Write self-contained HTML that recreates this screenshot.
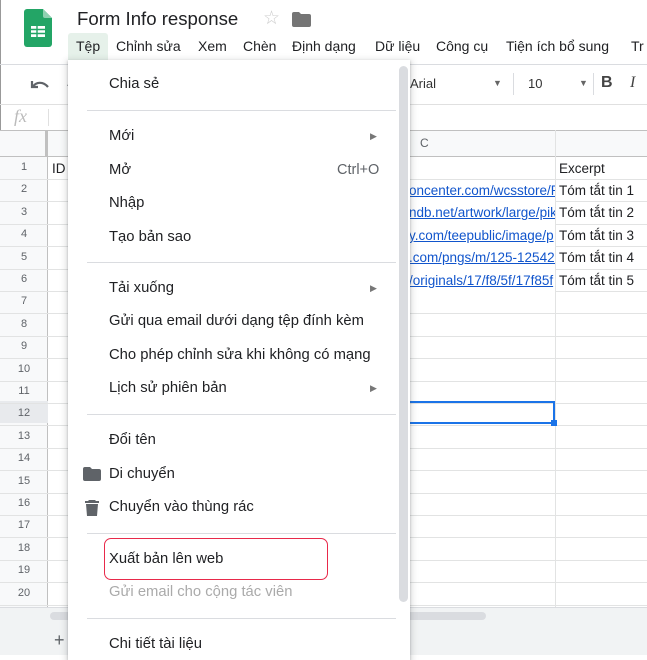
<!DOCTYPE html><html><head><meta charset="utf-8"><style>
*{margin:0;padding:0;box-sizing:border-box}
body{width:647px;height:655px;overflow:hidden;position:relative;background:#fff;font-family:"Liberation Sans",Arial,sans-serif;color:#202124}
.a{position:absolute}
.mb{position:absolute;top:38px;font-size:14px;color:#202124;white-space:nowrap}
.menu span.t{position:absolute;left:41px;font-size:14.8px;color:#202124;white-space:nowrap}
.hr{position:absolute;left:19px;width:309px;height:1px;background:#dadce0}
.rn{position:absolute;left:0;width:48px;text-align:center;font-size:11px;color:#5f6368}
.hl{position:absolute;left:0;width:647px;height:1px;background:#e2e3e3}
.lk{color:#1155cc;text-decoration:underline;font-size:13.5px;white-space:nowrap}
</style></head><body>
<svg class="a" style="left:24px;top:9px" width="28" height="38" viewBox="0 0 28 38"><path d="M3 0h16l9 9v26a3 3 0 0 1-3 3H3a3 3 0 0 1-3-3V3a3 3 0 0 1 3-3z" fill="#23a566"/><path d="M19 0l9 9h-7a2 2 0 0 1-2-2z" fill="#8ed1b1"/><rect x="7" y="17" width="14" height="11" fill="#fff"/><path d="M7 20.5h14M7 24.5h14M13 17v11" stroke="#23a566" stroke-width="1.4"/></svg>
<div class="a" style="left:77px;top:8px;font-size:18.6px;color:#202124">Form Info response</div>
<div class="a" style="left:263px;top:7px;font-size:19px;color:#ccc">☆</div>
<svg class="a" style="left:292px;top:12px" width="19" height="15"><path d="M0 2a2 2 0 0 1 2-2h5l2 2h8a2 2 0 0 1 2 2v9a2 2 0 0 1-2 2H2a2 2 0 0 1-2-2z" fill="#757575"/></svg>
<div class="a" style="left:68px;top:33px;width:40px;height:27px;background:#e6f1ea;border-radius:3px 3px 0 0"></div>
<span class="mb" style="left:76px">Tệp</span>
<span class="mb" style="left:116px">Chỉnh sửa</span>
<span class="mb" style="left:198px">Xem</span>
<span class="mb" style="left:243px">Chèn</span>
<span class="mb" style="left:292px">Định dạng</span>
<span class="mb" style="left:375px">Dữ liệu</span>
<span class="mb" style="left:436px">Công cụ</span>
<span class="mb" style="left:506px">Tiện ích bổ sung</span>
<span class="mb" style="left:631px">Tr</span>
<div class="a" style="left:0;top:0;width:1px;height:655px;background:#999"></div>
<div class="a" style="left:0;top:64px;width:647px;height:1px;background:#dadce0"></div>
<svg class="a" style="left:30px;top:78px" width="50" height="14"><path d="M2 3v6h6" fill="none" stroke="#5f6368" stroke-width="2.2"/><path d="M3 8.5C6 4 13 3 18 9" fill="none" stroke="#5f6368" stroke-width="2.2"/><path d="M38 8c3-4 7-5 12-3" fill="none" stroke="#5f6368" stroke-width="2.2"/></svg>
<div class="a" style="left:410px;top:76px;font-size:13px;color:#333">Arial</div>
<div class="a" style="left:493px;top:78px;font-size:9px;color:#666">▼</div>
<div class="a" style="left:513px;top:73px;width:1px;height:22px;background:#dadce0"></div>
<div class="a" style="left:528px;top:76px;font-size:13px;color:#333">10</div>
<div class="a" style="left:579px;top:78px;font-size:9px;color:#666">▼</div>
<div class="a" style="left:593px;top:73px;width:1px;height:22px;background:#dadce0"></div>
<div class="a" style="left:601px;top:74px;font-size:16px;font-weight:bold;color:#444">B</div>
<div class="a" style="left:630px;top:74px;font-size:16px;font-style:italic;font-family:'Liberation Serif',serif;color:#444">I</div>
<div class="a" style="left:0;top:104px;width:647px;height:1px;background:#e0e0e0"></div>
<div class="a" style="left:14px;top:106px;font-size:18px;font-style:italic;font-family:'Liberation Serif',serif;color:#bbb">fx</div>
<div class="a" style="left:48px;top:109px;width:1px;height:17px;background:#e0e0e0"></div>
<div class="a" style="left:0;top:130px;width:647px;height:27px;background:#f8f9fa;border-top:1px solid #c0c0c0;border-bottom:1px solid #c0c0c0"></div>
<div class="a" style="left:0;top:157px;width:48px;height:450px;background:#f8f9fa;border-right:1px solid #c0c0c0"></div>
<div class="a" style="left:0;top:401px;width:48px;height:22px;background:#e8eaed"></div>
<div class="a" style="left:45px;top:130px;width:3px;height:27px;background:#c0c0c0"></div>
<div class="a" style="left:420px;top:136px;font-size:12px;color:#5f6368">C</div>
<div class="a" style="left:555px;top:130px;width:1px;height:477px;background:#e2e3e3"></div>
<div id="g"></div>
<div class="a" style="left:52px;top:161px;font-size:13.5px">ID</div>
<div class="a" style="left:559px;top:161px;font-size:13.5px">Excerpt</div>
<div class="a" style="left:408px;top:180px;width:147px;height:115px;overflow:hidden;background:#fff">
<div class="a lk" style="left:1px;top:3px">oncenter.com/wcsstore/R</div>
<div class="a lk" style="left:1px;top:25px">ndb.net/artwork/large/pik</div>
<div class="a lk" style="left:1px;top:48px">y.com/teepublic/image/p</div>
<div class="a lk" style="left:1px;top:70px">.com/pngs/m/125-125420</div>
<div class="a lk" style="left:1px;top:93px">/originals/17/f8/5f/17f85f</div>
</div>
<div class="a" style="left:559px;top:180px;font-size:13.5px;line-height:22.4px">Tóm tắt tin 1<br>Tóm tắt tin 2<br>Tóm tắt tin 3<br>Tóm tắt tin 4<br>Tóm tắt tin 5</div>
<div class="a" style="left:405px;top:401px;width:150px;height:23px;border:2px solid #1a73e8;border-left:none"></div>
<div class="a" style="left:551px;top:420px;width:6px;height:6px;background:#1a73e8"></div>
<div class="a" style="left:0;top:607px;width:647px;height:48px;background:#f1f3f4;border-top:1px solid #dadce0"></div>
<div class="a" style="left:50px;top:612px;width:436px;height:8px;background:#dadce0;border-radius:4px"></div>
<div class="a" style="left:54px;top:630px;font-size:18px;color:#5f6368">+</div>
<script>
var g=document.getElementById('g'),h='';
for(var i=1;i<=20;i++){var t=157+(i-1)*22.4;h+='<div class="rn" style="top:'+(t+4)+'px">'+i+'</div><div class="hl" style="top:'+(t+22)+'px"></div>';}
g.innerHTML=h;
</script>
<div class="a menu" style="left:68px;top:60px;width:342px;height:600px;background:#fff;box-shadow:0 2px 6px 2px rgba(60,64,67,.18),0 1px 2px rgba(60,64,67,.3)">
<span class="t" style="top:16px">Chia sẻ</span>
<div class="hr" style="top:50px"></div>
<span class="t" style="top:68px">Mới</span><span class="a" style="left:302px;top:71px;font-size:9px;color:#777">▶</span>
<span class="t" style="top:102px">Mở</span><span class="a" style="left:269px;top:102px;font-size:14.5px;color:#5f6368">Ctrl+O</span>
<span class="t" style="top:135px">Nhập</span>
<span class="t" style="top:169px">Tạo bản sao</span>
<div class="hr" style="top:202px"></div>
<span class="t" style="top:220px">Tải xuống</span><span class="a" style="left:302px;top:223px;font-size:9px;color:#777">▶</span>
<span class="t" style="top:253px">Gửi qua email dưới dạng tệp đính kèm</span>
<span class="t" style="top:287px">Cho phép chỉnh sửa khi không có mạng</span>
<span class="t" style="top:320px">Lịch sử phiên bản</span><span class="a" style="left:302px;top:323px;font-size:9px;color:#777">▶</span>
<div class="hr" style="top:354px"></div>
<span class="t" style="top:372px">Đổi tên</span>
<svg class="a" style="left:15px;top:407px" width="18" height="14"><path d="M0 2a2 2 0 0 1 2-2h5l2 2h7a2 2 0 0 1 2 2v8a2 2 0 0 1-2 2H2a2 2 0 0 1-2-2z" fill="#5f6368"/></svg>
<span class="t" style="top:406px">Di chuyển</span>
<svg class="a" style="left:17px;top:440px" width="14" height="16"><path d="M4 0h6l1 1h3v2H0V1h3zM1 4h12l-1 12H2z" fill="#5f6368"/></svg>
<span class="t" style="top:439px">Chuyển vào thùng rác</span>
<div class="hr" style="top:473px"></div>
<div class="a" style="left:36px;top:478px;width:224px;height:42px;border:1.5px solid #e8294a;border-radius:7px"></div>
<span class="t" style="top:491px">Xuất bản lên web</span>
<span class="t" style="top:524px;color:#aaa">Gửi email cho cộng tác viên</span>
<div class="hr" style="top:558px"></div>
<span class="t" style="top:576px">Chi tiết tài liệu</span>
<div class="a" style="left:331px;top:6px;width:9px;height:536px;background:#dadce0;border-radius:5px"></div>
</div>
</body></html>
